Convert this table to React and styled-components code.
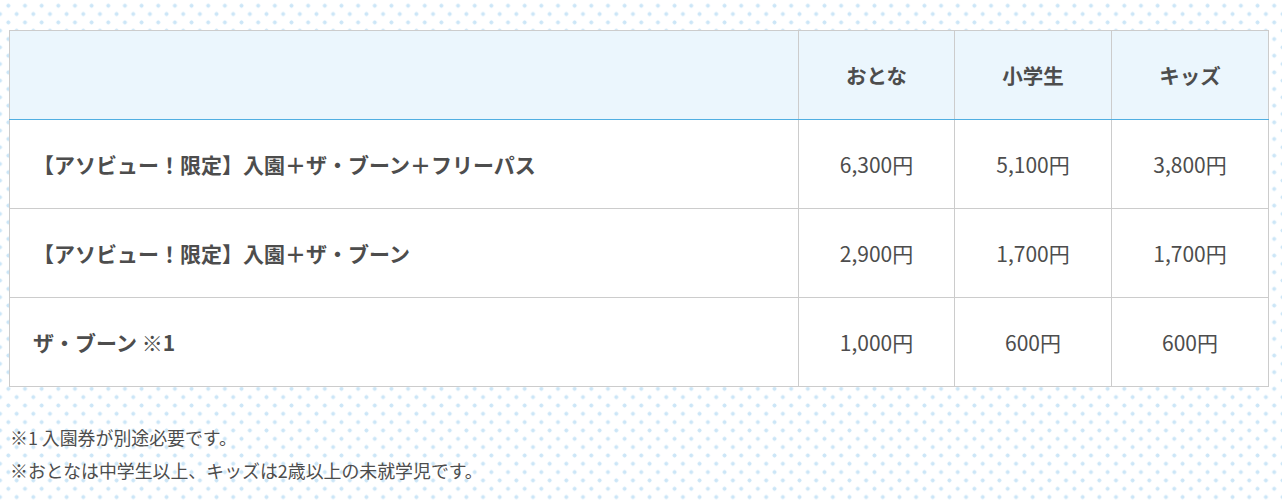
import styled, { createGlobalStyle } from "styled-components";

const GlobalStyle = createGlobalStyle`
  html, body {
    margin: 0;
    padding: 0;
  }
  body {
    font-family: "Noto Sans CJK JP", "Noto Sans", sans-serif;
    color: #4d4d4d;
    background-color: #ffffff;
    background-image:
      radial-gradient(circle, #cce6f7 1.7px, transparent 2.3px),
      radial-gradient(circle, #cce6f7 1.7px, transparent 2.3px);
    background-size: 16.66px 16.66px;
    background-position: 0px -2.6px, 8.33px 5.7px;
  }
`;

const Page = styled.div`
  padding: 30px 13px 20px 9px;
  min-height: 501px;
  box-sizing: border-box;
`;

const PriceTable = styled.table`
  width: 100%;
  border-collapse: collapse;
  background: #ffffff;
  border: 1px solid #cccccc;
  table-layout: fixed;
`;

const HeadCell = styled.th`
  height: 88px;
  padding: 0;
  background: #ebf6fd;
  border: 1px solid #cccccc;
  border-bottom: 1px solid #50afe2;
  font-size: 20.5px;
  font-weight: 700;
  text-align: center;
  color: #4d4d4d;
  width: ${(p) => p.$width || "auto"};
`;

const NameCell = styled.td`
  height: 88px;
  border: 1px solid #cccccc;
  padding: 0 23px;
  font-size: 21px;
  font-weight: 700;
  text-align: left;
`;

const PriceCell = styled.td`
  border: 1px solid #cccccc;
  padding: 0;
  font-size: 21px;
  font-weight: 400;
  text-align: center;
`;

const Notes = styled.div`
  margin-top: 34px;
  padding-left: 1px;
  font-size: 17.9px;
  line-height: 33px;
`;

const Note = styled.p`
  margin: 0;
`;

const plans = [
  { name: "【アソビュー！限定】入園＋ザ・ブーン＋フリーパス", prices: ["6,300円", "5,100円", "3,800円"] },
  { name: "【アソビュー！限定】入園＋ザ・ブーン", prices: ["2,900円", "1,700円", "1,700円"] },
  { name: "ザ・ブーン ※1", prices: ["1,000円", "600円", "600円"] },
];

export default function App() {
  return (
    <>
      <GlobalStyle />
      <Page>
        <PriceTable>
          <thead>
            <tr>
              <HeadCell />
              <HeadCell $width="155px">おとな</HeadCell>
              <HeadCell $width="156px">小学生</HeadCell>
              <HeadCell $width="156px">キッズ</HeadCell>
            </tr>
          </thead>
          <tbody>
            {plans.map((plan) => (
              <tr key={plan.name}>
                <NameCell>{plan.name}</NameCell>
                {plan.prices.map((price, i) => (
                  <PriceCell key={i}>{price}</PriceCell>
                ))}
              </tr>
            ))}
          </tbody>
        </PriceTable>
        <Notes>
          <Note>※1 入園券が別途必要です。</Note>
          <Note>※おとなは中学生以上、キッズは2歳以上の未就学児です。</Note>
        </Notes>
      </Page>
    </>
  );
}
